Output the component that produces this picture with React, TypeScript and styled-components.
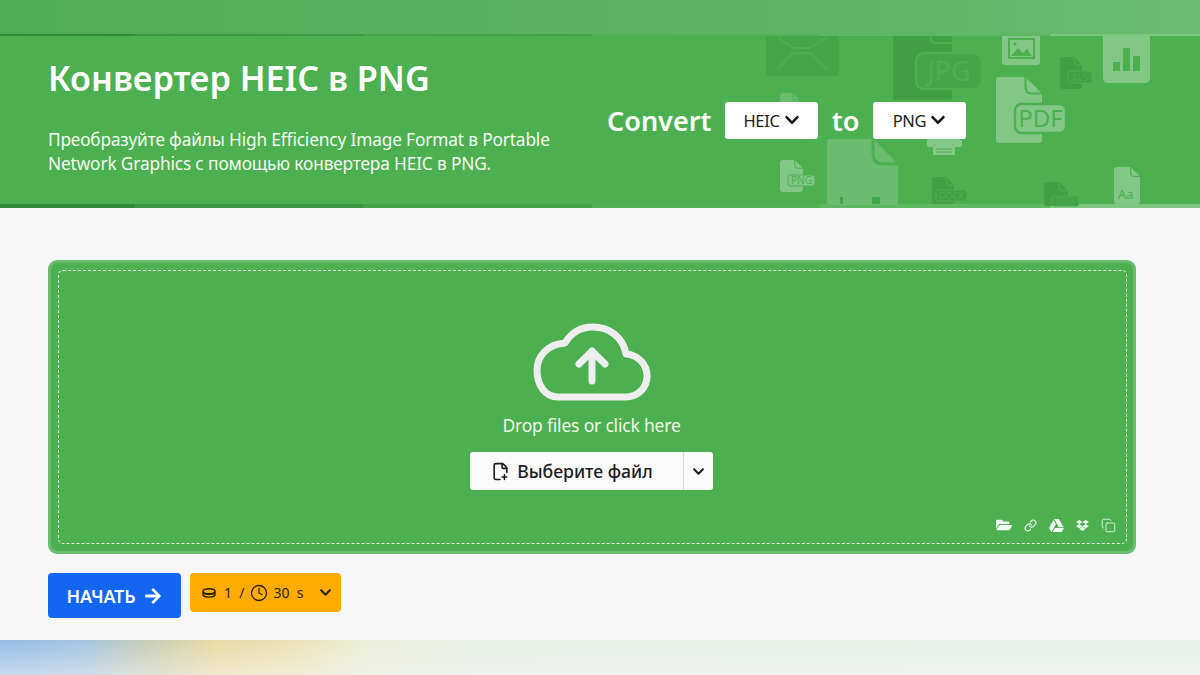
import React from "react";
import styled, { createGlobalStyle } from "styled-components";
import { FaArrowRight, FaChevronDown, FaDropbox, FaFolderOpen, FaGoogleDrive } from "react-icons/fa";
import { Clock, Copy, FilePlus2, Link } from "lucide-react";

const Global = createGlobalStyle`
  html, body { margin: 0; padding: 0; background: #f6f6f6; }
  body { font-family: "Noto Sans", "Open Sans", sans-serif; overflow: hidden; }
  * { box-sizing: border-box; }
`;

const Page = styled.div`
  width: 1200px;
  height: 675px;
  display: flex;
  flex-direction: column;
  overflow: hidden;
`;

const TopStrip = styled.div`
  height: 34px;
  background: linear-gradient(90deg, #4eae55 0%, #56b15c 35%, #5bb462 60%, #60b766 80%, #6dbd72 100%);
`;

const Hero = styled.header`
  position: relative;
  height: 174px;
  background: #4caf50;
  display: flex;
  flex-direction: column;
`;

const Edge = styled.div<{ $h: number }>`
  height: ${(p) => p.$h}px;
  display: flex;
  flex: none;
`;

const EdgePart = styled.div<{ $w: number; $c: string }>`
  width: ${(p) => p.$w}px;
  background: ${(p) => p.$c};
`;

const HeroBody = styled.div`
  position: relative;
  z-index: 1;
  flex: 1;
  display: flex;
  padding-left: 48px;
`;

const Intro = styled.div`
  width: 559px;
  flex: none;
  color: #fff;
`;

const Title = styled.h1`
  margin: 20px 0 0;
  font-size: 34.2px;
  line-height: 44px;
  font-weight: 600;
`;

const Lead = styled.p`
  margin: 28px 0 0;
  font-size: 17.3px;
  line-height: 24px;
  font-weight: 400;
  letter-spacing: -0.15px;
  color: #f4fbf2;
`;

const Converter = styled.div`
  display: flex;
  align-items: center;
  height: 37px;
  margin-top: 66px;
  color: #fff;
  font-size: 27px;
  font-weight: 600;
`;

const ConvertWord = styled.span`
  width: 118px;
`;

const ToWord = styled.span`
  width: 55px;
  text-align: center;
`;

const FormatSelect = styled.div`
  width: 93px;
  height: 37px;
  background: #fff;
  border-radius: 3px;
  color: #222;
  font-size: 16.5px;
  font-weight: 400;
  display: flex;
  align-items: center;
  justify-content: center;
  gap: 4px;
  padding-bottom: 1px;
  letter-spacing: -0.3px;
`;

const Deco = styled.svg`
  position: absolute;
  left: 590px;
  top: 0;
  width: 610px;
  height: 174px;
`;

const Main = styled.main`
  flex: 1;
  padding: 52px 64px 0 48px;
`;

const DropZone = styled.section`
  position: relative;
  height: 294px;
  background: #4caf50;
  border: 3px solid #6abd6e;
  border-radius: 9px;
  padding: 7px 6px 7px 7px;
`;

const DashedBox = styled.div`
  height: 100%;
  border: 1px dashed #eaf5ea;
  border-radius: 5px;
  display: flex;
  flex-direction: column;
  align-items: center;
  padding-top: 52px;
  padding-right: 2px;
`;

const DropText = styled.div`
  margin-top: 12px;
  color: #f1f8e9;
  font-size: 17.5px;
  line-height: 24px;
  letter-spacing: -0.2px;
`;

const PickerButton = styled.div`
  margin-top: 15px;
  width: 243px;
  height: 38px;
  display: flex;
  background: #fbfbfc;
  border-radius: 3px;
  color: #1c1c1c;
`;

const PickerMain = styled.div`
  width: 214px;
  display: flex;
  align-items: center;
  justify-content: center;
  gap: 7px;
  padding-right: 9px;
  font-size: 17.6px;
  font-weight: 500;
  border-right: 1px solid #d6d8d8;
`;

const PickerCaret = styled.div`
  flex: 1;
  display: flex;
  align-items: center;
  justify-content: center;
  font-size: 13px;
`;

const SourceIcons = styled.div`
  position: absolute;
  right: 17px;
  bottom: 18px;
  display: flex;
  align-items: center;
  gap: 12px;
  color: #f4fbf4;
  height: 16px;
`;

const Actions = styled.div`
  display: flex;
  align-items: flex-start;
  gap: 9px;
  margin-top: 19px;
`;

const StartButton = styled.div`
  width: 133px;
  height: 45px;
  background: #1266f1;
  border-radius: 4px;
  color: #fff;
  font-size: 18px;
  font-weight: 600;
  display: flex;
  align-items: center;
  justify-content: center;
  gap: 9px;
  letter-spacing: -0.15px;
`;

const CostButton = styled.div`
  width: 151px;
  height: 39px;
  background: #ffab00;
  border-radius: 4px;
  color: #2a2205;
  font-size: 14px;
  display: flex;
  align-items: center;
  padding-left: 12px;
`;

const CostText = styled.span<{ $m: number }>`
  margin-left: ${(p) => p.$m}px;
  white-space: pre;
`;

const CostCaret = styled.span`
  margin-left: auto;
  margin-right: 9px;
  display: flex;
  font-size: 13px;
`;

const Footer = styled.footer`
  height: 35px;
  flex: none;
  background:
    linear-gradient(180deg, rgba(246, 246, 246, 0) 0%, rgba(246, 246, 246, 0.5) 100%),
    linear-gradient(90deg, #94bce6 0%, #a3c3e2 80px, #c6cdb8 145px, #e9daa4 215px, #ece2b4 290px, #eaeed8 370px, #e7f0e6 480px, #e8f1e9 1200px);
`;

const GREEN = "#4caf50";

const FileShape = ({ x, y, w, h, c, fold = 0.36 }: { x: number; y: number; w: number; h: number; c: string; fold?: number }) => {
  const f = w * fold;
  const sw = Math.max(1, w * 0.045);
  return (
    <g>
      <path
        d={`M${x + 3} ${y}H${x + w - f}L${x + w} ${y + f}V${y + h - 3}Q${x + w} ${y + h} ${x + w - 3} ${y + h}H${x + 3}Q${x} ${y + h} ${x} ${y + h - 3}V${y + 3}Q${x} ${y} ${x + 3} ${y}Z`}
        fill={c}
      />
      <path
        d={`M${x + w - f} ${y}V${y + f * 0.6}Q${x + w - f} ${y + f} ${x + w - f * 0.6} ${y + f}H${x + w}`}
        fill="none"
        stroke={GREEN}
        strokeWidth={sw}
      />
    </g>
  );
};

const Tag = ({ x, y, w, h, c, fill, label, size }: { x: number; y: number; w: number; h: number; c: string; fill: string; label: string; size: number }) => (
  <g>
    <rect x={x} y={y} width={w} height={h} rx={h * 0.22} fill={fill} stroke={c} strokeWidth={size > 14 ? 2.5 : 1} />
    <text x={x + w / 2} y={y + h / 2 + size * 0.37} textAnchor="middle" fontSize={size} fontFamily="Noto Sans, sans-serif" fill={c}>
      {label}
    </text>
  </g>
);

const BackgroundIcons = () => {
  const dark = "#45a549";
  const darker = "#41a046";
  const pale = "#82c786";
  const mid = "#6bbc6f";
  return (
    <Deco viewBox="590 34 610 174" aria-hidden="true">
      <path d="M766 36h73v35q0 5-5 5h-63q-5 0-5-5z" fill={dark} />
      <path d="M777 37L793 48H810L828 37M793 53H810M777 70L793 53M828 70L810 53" stroke={GREEN} strokeWidth="2" fill="none" />
      <rect x="893" y="36" width="59" height="64" fill={darker} />
      <path d="M931 36v3q0 4 4 4h17" fill="none" stroke={GREEN} strokeWidth="2" />
      <Tag x={916} y={53} w={66} h={36} c={GREEN} fill={dark} label="JPG" size={27} />
      <path d="M1002 36h38v26q0 3-3 3h-32q-3 0-3-3z" fill={pale} />
      <rect x="1009" y="39" width="25" height="19" fill="none" stroke={GREEN} strokeWidth="2" />
      <path d="M1011 56l7-8 5 5 4-4 5 7z" fill={GREEN} />
      <circle cx="1015" cy="44" r="1.6" fill={GREEN} />
      <FileShape x={1060} y={57} w={22} h={32} c={darker} />
      <Tag x={1068} y={71} w={24} h={12} c={GREEN} fill={darker} label="XLS" size={10} />
      <path d="M1103 36h47v42q0 5-5 5h-37q-5 0-5-5z" fill={pale} />
      <rect x="1113" y="62" width="7" height="9" fill={GREEN} />
      <rect x="1123" y="48" width="7" height="23" fill={GREEN} />
      <rect x="1133" y="56" width="7" height="15" fill={GREEN} />
      <FileShape x={996} y={77} w={46} h={66} c={pale} />
      <Tag x={1015} y={104} w={51} h={29} c={GREEN} fill={pale} label="PDF" size={24} />
      <FileShape x={780} y={93} w={20} h={20} c={mid} />
      <rect x="927" y="139" width="35" height="8" rx="2" fill={pale} />
      <rect x="933" y="146" width="22" height="9" fill={pale} />
      <path d="M936 149h16M936 152h16" stroke={GREEN} strokeWidth="1" />
      <FileShape x={780} y={160} w={23} h={32} c={pale} />
      <Tag x={788} y={175} w={27} h={11} c={GREEN} fill={pale} label="PNG" size={10} />
      <FileShape x={827} y={139} w={71} h={66} c={mid} fold={0.35} />
      <rect x="840" y="197" width="3" height="7" fill={dark} />
      <rect x="872" y="197" width="8" height="7" fill={dark} />
      <FileShape x={932} y={177} w={22} h={27} c={darker} />
      <Tag x={936} y={190} w={31} h={11} c={GREEN} fill={darker} label="DOCX" size={9} />
      <FileShape x={1044} y={182} w={24} h={24} c={darker} />
      <Tag x={1052} y={196} w={27} h={10} c={GREEN} fill={darker} label="PPTX" size={8} />
      <FileShape x={1114} y={167} w={26} h={37} c={pale} />
      <text x="1118" y="199" fontSize="13" fontFamily="Noto Sans, sans-serif" fill={GREEN}>Aa</text>
    </Deco>
  );
};

const CloudIcon = () => (
  <svg width="118" height="78" viewBox="0 0 118 78" fill="none" stroke="#eeeeee" strokeWidth="7" strokeLinecap="round" strokeLinejoin="round">
    <path d="M25 74H92C105 74 114 65 114 53C114 41 105 32 93 31C90 14 76 4 60 4C48 4 38 10 32 20C15 21 4 33 4 47C4 62 12 74 25 74Z" />
    <path d="M59 58V28M46 41L59 28L72 41" />
  </svg>
);

const CoinIcon = () => (
  <svg width="14" height="10" viewBox="0 0 14 10" fill="none" stroke="#2a2205" strokeWidth="1.4">
    <ellipse cx="7" cy="3.2" rx="6" ry="2.5" />
    <path d="M1 3.2V6.6C1 8 3.6 9.1 7 9.1S13 8 13 6.6V3.2" />
    <path d="M1 5.2C2.7 6.2 4.8 6.4 7 6.4S11.3 6.2 13 5.2" />
  </svg>
);

const EDGE_PARTS: Array<[number, string]> = [
  [135, "#2f8a36"],
  [228, "#3b9741"],
  [229, "#44a349"],
  [228, "#50b155"],
  [230, "#5db862"],
  [150, "#7cc67f"],
];

const HeroEdge = ({ h }: { h: number }) => (
  <Edge $h={h}>
    {EDGE_PARTS.map(([w, c]) => (
      <EdgePart key={w + c} $w={w} $c={c} />
    ))}
  </Edge>
);

export default function App() {
  return (
    <Page>
      <Global />
      <TopStrip />
      <Hero>
        <BackgroundIcons />
        <HeroEdge h={2} />
        <HeroBody>
          <Intro>
            <Title>Конвертер HEIC в PNG</Title>
            <Lead>
              Преобразуйте файлы High Efficiency Image Format в Portable
              <br />
              Network Graphics с помощью конвертера HEIC в PNG.
            </Lead>
          </Intro>
          <Converter>
            <ConvertWord>Convert</ConvertWord>
            <FormatSelect>
              HEIC <FaChevronDown size={16} color="#111" />
            </FormatSelect>
            <ToWord>to</ToWord>
            <FormatSelect>
              PNG <FaChevronDown size={16} color="#111" />
            </FormatSelect>
          </Converter>
        </HeroBody>
        <HeroEdge h={4} />
      </Hero>
      <Main>
        <DropZone>
          <DashedBox>
            <CloudIcon />
            <DropText>Drop files or click here</DropText>
            <PickerButton>
              <PickerMain>
                <FilePlus2 size={19} strokeWidth={2} />
                Выберите файл
              </PickerMain>
              <PickerCaret>
                <FaChevronDown />
              </PickerCaret>
            </PickerButton>
          </DashedBox>
          <SourceIcons>
            <FaFolderOpen size={16} />
            <Link size={13} strokeWidth={2} />
            <FaGoogleDrive size={15} />
            <FaDropbox size={13} />
            <Copy size={15} strokeWidth={1.3} />
          </SourceIcons>
        </DropZone>
        <Actions>
          <StartButton>
            НАЧАТЬ <FaArrowRight size={18} />
          </StartButton>
          <CostButton>
            <CoinIcon />
            <CostText $m={8}>1  /</CostText>
            <CostText $m={5}>
              <Clock size={18} strokeWidth={1.7} style={{ display: "block" }} />
            </CostText>
            <CostText $m={6}>30  s</CostText>
            <CostCaret>
              <FaChevronDown />
            </CostCaret>
          </CostButton>
        </Actions>
      </Main>
      <Footer />
    </Page>
  );
}
